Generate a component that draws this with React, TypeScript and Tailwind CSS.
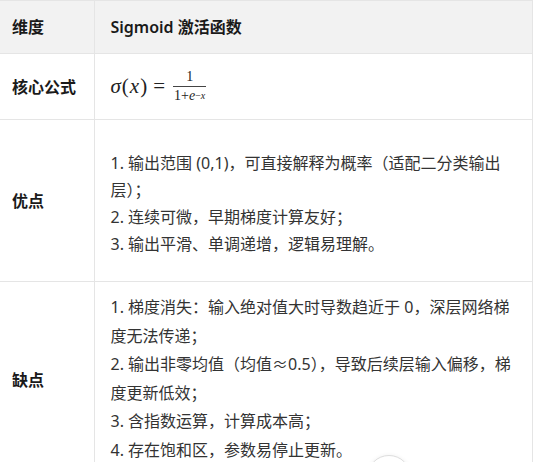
import React from "react";

const font = { fontFamily: '"Noto Sans", "Noto Sans CJK SC", sans-serif' };

function Formula() {
  return (
    <span className="inline-flex items-center text-[21px] text-[#222]" style={{ fontFamily: '"Liberation Serif", serif' }}>
      <span className="italic">σ</span>
      <span className="ml-[1px]">(</span>
      <span className="mx-[1px] italic">x</span>
      <span>)</span>
      <span className="mr-[8px] ml-[6px]">=</span>
      <span className="inline-flex flex-col items-center text-[14px] leading-none">
        <span className="px-[2px] pb-[2px]">1</span>
        <span className="border-t border-[#444] px-[1px] pt-[2px]">
          1+<span className="italic">e</span>
          <sup className="relative -top-[1px] text-[10px]">
            −<span className="italic">x</span>
          </sup>
        </span>
      </span>
    </span>
  );
}

export default function App() {
  const pros = [
    "1. 输出范围 (0,1)，可直接解释为概率（适配二分类输出层）；",
    "2. 连续可微，早期梯度计算友好；",
    "3. 输出平滑、单调递增，逻辑易理解。"
  ];
  const cons = [
    "1. 梯度消失：输入绝对值大时导数趋近于 0，深层网络梯度无法传递；",
    "2. 输出非零均值（均值≈0.5），导致后续层输入偏移，梯度更新低效；",
    "3. 含指数运算，计算成本高；",
    "4. 存在饱和区，参数易停止更新。"
  ];

  return (
    <div className="relative h-[462px] w-[533px] overflow-hidden bg-white" style={font}>
      <table className="w-[533px] border-collapse text-[16px]">
        <tbody>
          <tr className="h-[53px] bg-[#f2f2f2]">
            <th className="w-[94px] border-t border-r border-b border-[#e5e5e5] pl-3 text-left font-bold text-[#1a1a1a]">维度</th>
            <th className="border-t border-r border-b border-[#e5e5e5] pl-4 text-left font-semibold text-[#1a1a1a]">Sigmoid 激活函数</th>
          </tr>
          <tr className="h-[66px]">
            <td className="border-r border-b border-[#e5e5e5] pl-3 font-bold text-[#1a1a1a]">核心公式</td>
            <td className="border-r border-b border-[#e5e5e5] pl-4">
              <Formula />
            </td>
          </tr>
          <tr>
            <td className="border-r border-b border-[#e5e5e5] pl-3 font-bold text-[#1a1a1a]">优点</td>
            <td className="border-r border-b border-[#e5e5e5] pt-[30px] pr-4 pb-[23px] pl-4 leading-[27px] text-[#333]">
              {pros.map((t) => (
                <div key={t}>{t}</div>
              ))}
            </td>
          </tr>
          <tr>
            <td className="border-r border-b border-[#e5e5e5] pl-3 font-bold text-[#1a1a1a]">缺点</td>
            <td className="border-r border-b border-[#e5e5e5] pt-[11px] pr-4 pb-[14px] pl-4 leading-[28.5px] text-[#333]">
              {cons.map((t) => (
                <div key={t}>{t}</div>
              ))}
            </td>
          </tr>
        </tbody>
      </table>
      <div className="absolute top-[455px] left-[367px] h-[44px] w-[44px] rounded-full border border-[#dedede] bg-white shadow-[0_0_4px_rgba(0,0,0,0.06)]" />
    </div>
  );
}
